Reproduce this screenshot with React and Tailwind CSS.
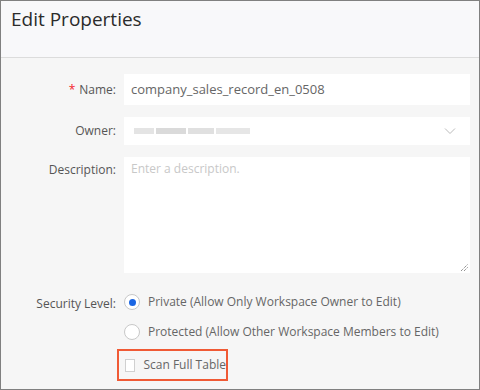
import React from "react";

const font = { fontFamily: '"Segoe UI", "Open Sans", "Noto Sans", sans-serif' };

const Label = ({ children, required }) => (
  <div className="w-[116px] shrink-0 pr-[1px] text-right text-[12px] text-[#555]">
    {required && <span className="mr-1 text-[#f5222d]">*</span>}
    {children}
  </div>
);

const Radio = ({ checked, label }) => (
  <label className="flex h-[16px] items-center gap-[8px] whitespace-nowrap text-[12px] text-[#666]">
    <span className="flex h-[16px] w-[16px] items-center justify-center rounded-full border border-[#c8c8c8] bg-white">
      {checked && <span className="h-[7px] w-[7px] rounded-full bg-[#1b66e3]" />}
    </span>
    {label}
  </label>
);

export default function App() {
  return (
    <div className="h-[390px] w-[480px] overflow-hidden border border-[#808080] bg-[#f6f6f6]" style={font}>
      <div className="h-[57px] border-b border-[#dcdcdc] bg-[#f8f8fa] pl-[10px] pt-[4px] text-[19px] text-[#2b2b2b]">
        Edit Properties
      </div>

      <div className="flex flex-col pr-[9px] pt-[16px]">
        <div className="flex items-center gap-[7px]">
          <Label required>Name:</Label>
          <div className="flex h-[31px] flex-1 items-center bg-white px-[7px] text-[13px] text-[#666]">
            company_sales_record_en_0508
          </div>
        </div>

        <div className="mt-[12px] flex items-center gap-[7px]">
          <Label>Owner:</Label>
          <div className="flex h-[28px] flex-1 items-center justify-between bg-white pl-[10px] pr-[14px]">
            <div className="flex gap-[2px]">
              <span className="h-[6px] w-[20px] bg-[#e4e4e4]" />
              <span className="h-[6px] w-[30px] bg-[#dadada]" />
              <span className="h-[6px] w-[26px] bg-[#e0e0e0]" />
              <span className="h-[6px] w-[34px] bg-[#e6e6e6]" />
            </div>
            <svg width="12" height="8" viewBox="0 0 12 8" fill="none" stroke="#bbb" strokeWidth="1">
              <path d="M1 1.5 L6 6.5 L11 1.5" />
            </svg>
          </div>
        </div>

        <div className="mt-[12px] flex items-start gap-[7px]">
          <div className="pt-[4px]">
            <Label>Description:</Label>
          </div>
          <div className="relative h-[116px] flex-1 bg-white px-[7px] pt-[3px] text-[12px] text-[#c8c8c8]">
            Enter a description.
            <svg className="absolute bottom-[1px] right-[1px]" width="9" height="9" viewBox="0 0 9 9" stroke="#666" strokeWidth="1" strokeDasharray="1 1">
              <path d="M1 8 L8 1 M4 8 L8 4" />
            </svg>
          </div>
        </div>

        <div className="mt-[21px] flex items-start gap-[7px]">
          <div className="pt-[1px]">
            <Label>Security Level:</Label>
          </div>
          <div className="flex flex-col gap-[14px]">
            <Radio checked label="Private (Allow Only Workspace Owner to Edit)" />
            <Radio label="Protected (Allow Other Workspace Members to Edit)" />
          </div>
        </div>

        <div className="mt-[9px] pl-[116px]">
          <div className="flex h-[32px] w-[111px] items-center gap-[8px] whitespace-nowrap border-2 border-[#f05a35] pl-[6px] text-[12px] text-[#666]">
            <span className="h-[13px] w-[13px] border border-[#d0d0d0] bg-white" />
            Scan Full Table
          </div>
        </div>
      </div>
    </div>
  );
}
